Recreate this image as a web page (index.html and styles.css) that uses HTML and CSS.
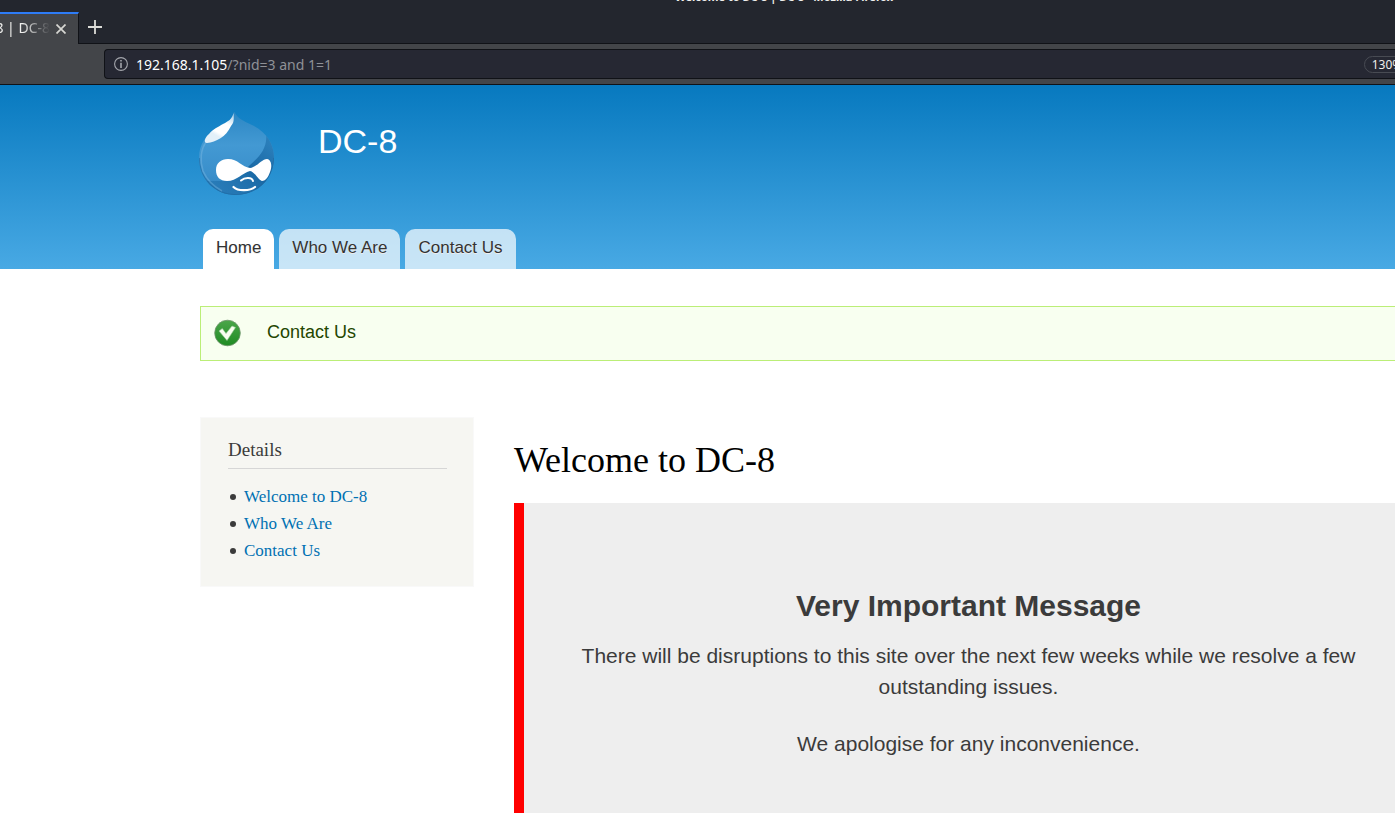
FILE: index.html
```
<!DOCTYPE html>
<html lang="en">
<head>
    <meta charset="UTF-8">
    <meta name="viewport" content="width=device-width, initial-scale=1.0">
    <title>Welcome to DC-8 | DC-8</title>
    <link rel="stylesheet" href="styles.css">
</head>
<body>
    <div class="browser">
        <div class="window-title"><span>Welcome to DC-8 | DC-8 - Mozilla Firefox</span></div>
        <div class="tab-bar">
            <div class="tab">
                <span class="tab-label">8 | DC-8</span>
                <button class="tab-close" type="button" aria-label="Close tab">
                    <svg width="10" height="10" viewBox="0 0 10 10"><path d="M0.5 0.5L9.5 9.5M9.5 0.5L0.5 9.5" stroke="#d7d7d3" stroke-width="1.7" fill="none"/></svg>
                </button>
            </div>
            <button class="new-tab" type="button" aria-label="New tab">
                <svg width="14" height="14" viewBox="0 0 14 14"><path d="M7 0V14M0 7H14" stroke="#dcdcd8" stroke-width="1.8" fill="none"/></svg>
            </button>
        </div>
        <div class="toolbar">
            <div class="url-bar">
                <svg width="14" height="14" viewBox="0 0 14 14">
                    <circle cx="7" cy="7" r="6.4" fill="none" stroke="#a4a6ac" stroke-width="1.1"/>
                    <path d="M6.2 3h1.6v1.6H6.2zM6.2 5.8h1.6V11H6.2z" fill="#a4a6ac"/>
                </svg>
                <span class="url"><span class="url-host">192.168.1.105</span>/?nid=3 and 1=1</span>
                <button class="zoom-level" type="button">130%</button>
            </div>
        </div>
    </div>

    <header class="site-header">
        <div class="branding">
            <a href="#" class="logo" aria-label="Home">
                <svg width="76" height="84" viewBox="0 0 76 84">
                    <defs>
                        <linearGradient id="drop" x1="0" y1="0" x2="0" y2="1">
                            <stop offset="0" stop-color="#2b86c3"/>
                            <stop offset="0.4" stop-color="#4399d3"/>
                            <stop offset="0.75" stop-color="#3a8fcb"/>
                            <stop offset="1" stop-color="#2c80bd"/>
                        </linearGradient>
                        <linearGradient id="shade" x1="1" y1="0" x2="0" y2="1">
                            <stop offset="0" stop-color="#1d71ae" stop-opacity="0.5"/>
                            <stop offset="0.45" stop-color="#1a69a5"/>
                            <stop offset="1" stop-color="#2b80bd" stop-opacity="0.7"/>
                        </linearGradient>
                        <linearGradient id="shine" gradientUnits="userSpaceOnUse" x1="34" y1="4" x2="22" y2="26">
                            <stop offset="0" stop-color="#b5d6ed"/>
                            <stop offset="0.4" stop-color="#fff"/>
                            <stop offset="0.85" stop-color="#fff"/>
                            <stop offset="1" stop-color="#e3f0f9"/>
                        </linearGradient>
                        <clipPath id="drop-clip"><path d="M35 -1C38 6 44 9 53 13C67 20 75 31 75 46C75 67 58 83 37 83C16 83 0 67 0 46C0 32 7 22 20 15C29 10 34 7 35 -1Z"/></clipPath>
                    </defs>
                    <g clip-path="url(#drop-clip)">
                        <path d="M0 -1H76V84H0Z" fill="url(#drop)"/>
                        <path d="M67 21C69 36 60 45 51 53C43 61 34 68 24 69H0V84H76V25Z" fill="url(#shade)"/>
                        <path d="M0 46C0 67 16 83 37 83C58 83 75 67 75 46" fill="none" stroke="#1d659d" stroke-width="1.6" opacity="0.6"/>
                        <path d="M8 29C1 37 1 50 4 59C8 68 14 74 23 79" fill="none" stroke="#8bc4e8" stroke-width="1.6" opacity="0.35"/>
                    </g>
                    <path d="M34.600 1C35 7 35 11 32 14C27 25 17 30 8 31C4 31 6 25 10 22C14 17 19 15 24 12C30 9 33 7 34.600 1Z" fill="url(#shine)"/>
                    <path d="M29 47C39 47 43 55 51 56C58 55 63 47 68 47C73 48 73 55 71 60C69 66 66 69 63 69C59 68 56 60 51 59C43 61 38 69 28 69C21 69 17 65 17 58C17 51 22 47 29 47Z" fill="#fff"/>
                    <path d="M42 68.500C46 65 53 65 54 69" fill="none" stroke="#fff" stroke-width="2" stroke-linecap="round"/>
                    <path d="M34.500 75C39 79.500 51 79 56 75" fill="none" stroke="#fff" stroke-width="2.200" stroke-linecap="round"/>
                </svg>
            </a>
            <a href="#" class="site-name">DC-8</a>
        </div>
        <nav class="main-menu">
            <a href="#" class="active">Home</a>
            <a href="#">Who We Are</a>
            <a href="#">Contact Us</a>
        </nav>
    </header>

    <div class="page">
        <div class="status-message">
            <svg width="28" height="28" viewBox="0 0 28 28">
                <defs>
                    <linearGradient id="ok" x1="0" y1="0" x2="0" y2="1">
                        <stop offset="0" stop-color="#4ba64a"/>
                        <stop offset="1" stop-color="#1f8b23"/>
                    </linearGradient>
                </defs>
                <circle cx="13.500" cy="14" r="12.800" fill="url(#ok)" stroke="#6f936c" stroke-width="0.800"/>
                <path d="M5 12L8.300 9.500L12 14.500L18 7L21.500 8.500L13 21.500Z" fill="#f8fff0" stroke="#9bc898" stroke-width="0.600"/>
            </svg>
            <span>Contact Us</span>
        </div>

        <div class="columns">
            <aside class="sidebar">
                <h2>Details</h2>
                <ul>
                    <li><a href="#">Welcome to DC-8</a></li>
                    <li><a href="#">Who We Are</a></li>
                    <li><a href="#">Contact Us</a></li>
                </ul>
            </aside>
            <main class="content">
                <h1>Welcome to DC-8</h1>
                <div class="notice">
                    <h2>Very Important Message</h2>
                    <p>There will be disruptions to this site over the next few weeks while we resolve a few outstanding issues.</p>
                    <p>We apologise for any inconvenience.</p>
                </div>
            </main>
        </div>
    </div>
</body>
</html>
```

FILE: styles.css
```
* {
    box-sizing: border-box;
}
body {
    margin: 0;
    background: #fff;
    color: #3b3b3b;
    font-family: "Liberation Serif", serif;
    overflow: hidden;
}
a {
    color: #0071b3;
    text-decoration: none;
}
button {
    padding: 0;
    border: none;
    background: none;
    color: inherit;
    font: inherit;
    cursor: pointer;
}
svg {
    display: block;
    flex: none;
}

/* Browser window */
.browser {
    background: #23262e;
    color: #eeeeec;
    font-family: "Noto Sans", sans-serif;
    font-size: 14px;
}
.window-title {
    display: flex;
    justify-content: center;
    align-items: flex-end;
    height: 3px;
    padding-left: 173px;
    font-size: 11px;
    font-weight: bold;
    line-height: 12px;
}
.tab-bar {
    display: flex;
    align-items: flex-end;
    height: 41px;
    border-bottom: 1px solid #101217;
}
.tab {
    display: flex;
    align-items: center;
    justify-content: flex-end;
    width: 79px;
    height: 32px;
    margin-bottom: -1px;
    padding-right: 12px;
    background: #434549;
    border-top: 2px solid #2e7cf6;
    border-right: 1px solid #101217;
}
.tab-label {
    flex: 1;
    display: flex;
    justify-content: flex-end;
    margin-right: 6px;
    padding-bottom: 3px;
    white-space: nowrap;
    -webkit-mask-image: linear-gradient(to right, #000 50%, transparent);
    mask-image: linear-gradient(to right, #000 50%, transparent);
}
.new-tab {
    margin: 0 0 9px 9px;
}
.toolbar {
    display: flex;
    height: 41px;
    padding: 5px 0 5px 104px;
    background: #434549;
    border-bottom: 1px solid #101217;
}
.url-bar {
    flex: 1;
    display: flex;
    align-items: center;
    gap: 8px;
    padding-left: 9px;
    background: #262833;
    border: 1px solid #101217;
    border-right: none;
    border-radius: 4px 0 0 4px;
}
.url {
    flex: 1;
    color: #8f9197;
}
.url-host {
    color: #fff;
}
.zoom-level {
    width: 46px;
    height: 17px;
    margin-right: -15px;
    border: 1px solid #484b53;
    border-radius: 9px;
    font-size: 12px;
    line-height: 15px;
}

/* Site header */
.site-header {
    padding: 27px 0 0 199px;
    background: linear-gradient(#0779bf, #48a9e4);
    font-family: "Liberation Sans", sans-serif;
}
.branding {
    display: flex;
    align-items: flex-start;
    gap: 43px;
}
.site-name {
    padding-top: 9px;
    color: #fff;
    font-size: 34px;
    line-height: 40px;
}
.main-menu {
    display: flex;
    gap: 5px;
    padding: 33px 0 0 4px;
}
.main-menu a {
    padding: 0 13px;
    height: 40px;
    background: rgba(255, 255, 255, 0.7);
    border-radius: 10px 10px 0 0;
    color: #333;
    font-size: 17px;
    line-height: 37px;
    text-shadow: 0 1px #eee;
}
.main-menu a.active {
    background: #fff;
}

/* Page */
.page {
    padding: 37px 0 0 200px;
}
.status-message {
    display: flex;
    align-items: flex-start;
    gap: 25px;
    height: 55px;
    padding: 12px 0 0 13px;
    background: #f8fff0;
    border: 1px solid #be7;
    border-right: none;
    color: #234600;
    font-family: "Liberation Sans", sans-serif;
    font-size: 18px;
    line-height: 26px;
}
.columns {
    display: flex;
    align-items: flex-start;
    gap: 40px;
    margin-right: -18px;
    padding-top: 56px;
}
.sidebar {
    width: 274px;
    padding: 20px 26px 22px 27px;
    background: #f6f6f2;
    border: 1px solid #f9f9f9;
}
.sidebar h2 {
    margin: 0 0 14px;
    padding-bottom: 6px;
    border-bottom: 1px solid #d6d6d6;
    font-size: 19px;
    font-weight: normal;
    line-height: 24px;
}
.sidebar ul {
    margin: 0;
    padding: 0;
    list-style: none;
}
.sidebar li {
    display: flex;
    align-items: center;
    gap: 8px;
    padding-left: 2px;
    font-size: 17px;
    line-height: 27px;
}
.sidebar li::before {
    content: "";
    width: 6px;
    height: 6px;
    border-radius: 50%;
    background: #3b3b3b;
}
.content {
    flex: 1;
}
.content h1 {
    margin: 22px 0;
    color: #000;
    font-size: 36px;
    font-weight: normal;
    line-height: 42px;
}
.notice {
    padding: 82px 50px 54px;
    background: #eee;
    border-left: 10px solid #f00;
    font-family: "Liberation Sans", sans-serif;
    font-size: 21px;
    line-height: 31px;
    text-align: center;
}
.notice h2 {
    margin: 0 0 13px;
    font-size: 30px;
    line-height: 42px;
}
.notice p {
    margin: 0 0 26px;
}
.notice p:last-child {
    margin-bottom: 0;
}
```
